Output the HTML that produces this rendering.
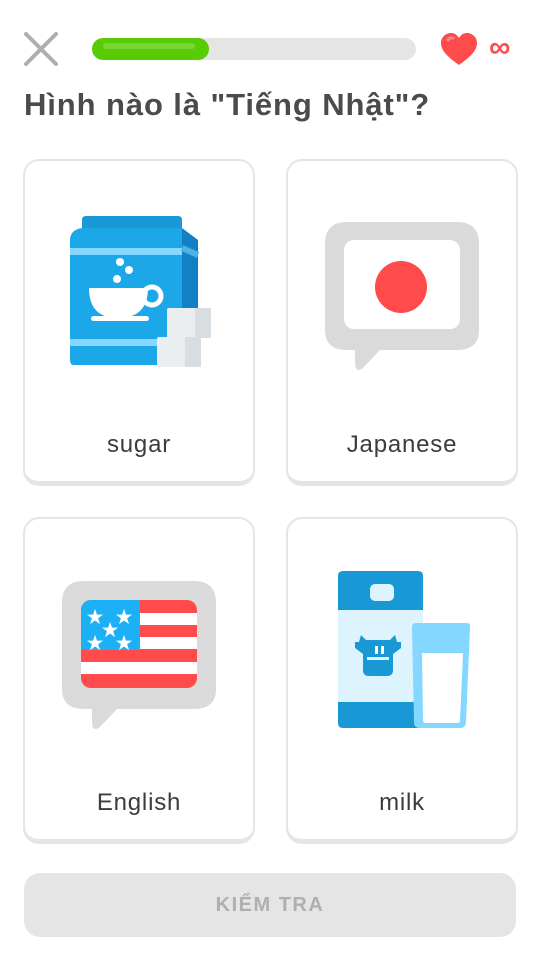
<!DOCTYPE html>
<html><head><meta charset="utf-8"><style>
body{margin:0;width:540px;height:961px;background:#fff;font-family:"Liberation Sans",sans-serif;position:relative;overflow:hidden}
.card{position:absolute;width:228px;height:320px;border:2px solid #e5e5e5;border-bottom-width:5px;border-radius:16px;box-sizing:content-box}
.lbl{position:absolute;left:0;right:0;text-align:center;font-size:24px;color:#3c3c3c;letter-spacing:0.8px}
svg{position:absolute}
</style></head><body>
<svg style="left:22px;top:30px" width="38" height="38" viewBox="0 0 38 38"><path d="M4 4L34 34M34 4L4 34" stroke="#afafaf" stroke-width="4" stroke-linecap="round"/></svg>
<div style="position:absolute;left:92px;top:38px;width:324px;height:22px;background:#e5e5e5;border-radius:11px"></div>
<div style="position:absolute;left:92px;top:38px;width:117px;height:22px;background:#58cc02;border-radius:11px"></div>
<div style="position:absolute;left:103px;top:43px;width:92px;height:6px;background:#79d634;border-radius:3px"></div>
<svg style="left:440px;top:33px" width="38" height="33" viewBox="0 0 38 33"><path d="M19 32C8 24 1 18 1 10C1 4 6 0 11 0C15 0 17 2 19 5C21 2 23 0 27 0C32 0 37 4 37 10C37 18 30 24 19 32Z" fill="#ff4b4b"/><path d="M8 7Q10 4 13 5" stroke="#ff8a8a" stroke-width="3" fill="none" stroke-linecap="round"/></svg>
<div style="position:absolute;left:489px;top:31px;font-size:30px;font-weight:bold;color:#ff4b4b">∞</div>
<div style="position:absolute;left:24px;top:87px;font-size:31px;font-weight:bold;color:#4b4b4b;letter-spacing:0.9px">Hình nào là "Tiếng Nhật"?</div>

<div class="card" style="left:23px;top:159px"><div class="lbl" style="top:270px">sugar</div></div>
<div class="card" style="left:286px;top:159px"><div class="lbl" style="top:270px">Japanese</div></div>
<div class="card" style="left:23px;top:517px"><div class="lbl" style="top:270px">English</div></div>
<div class="card" style="left:286px;top:517px"><div class="lbl" style="top:270px">milk</div></div>

<!-- sugar -->
<svg style="left:60px;top:200px" width="160" height="180" viewBox="0 0 160 180">
<path d="M22 20Q22 16 26 16H118Q122 16 122 20V30H22Z" fill="#1899d6"/>
<path d="M10 40Q10 30 22 28H122V165H14Q10 165 10 160Z" fill="#1ca8e8"/>
<path d="M122 28L138 40V160Q138 165 134 165H122Z" fill="#1280c4"/>
<rect x="10" y="48" width="112" height="7" fill="#84d8ff"/>
<rect x="10" y="139" width="112" height="7" fill="#84d8ff"/>
<path d="M122 48L138 55" stroke="#4fb3e3" stroke-width="6"/>
<circle cx="60" cy="62" r="4" fill="#fff"/><circle cx="69" cy="70" r="4" fill="#fff"/><circle cx="57" cy="79" r="4" fill="#fff"/>
<path d="M29 88H88Q88 118 58 118Q29 118 29 88Z" fill="#fff"/>
<circle cx="92" cy="96" r="9" fill="none" stroke="#fff" stroke-width="5"/>
<rect x="31" y="116" width="58" height="5" rx="2.5" fill="#fff"/>
<rect x="107" y="108" width="44" height="30" rx="2" fill="#eaeef0"/><rect x="135" y="108" width="16" height="30" fill="#d7dde0"/>
<rect x="97" y="137" width="44" height="30" rx="2" fill="#eaeef0"/><rect x="125" y="137" width="16" height="30" fill="#d7dde0"/>
</svg>

<!-- japan -->
<svg style="left:325px;top:222px" width="154" height="150" viewBox="0 0 154 150">
<path d="M22 0H132Q154 0 154 22V108Q154 128 132 128H55L38 146Q30 152 30 140V128H22Q0 128 0 108V22Q0 0 22 0Z" fill="#dadada"/>
<rect x="19" y="18" width="116" height="89" rx="10" fill="#fff"/>
<circle cx="76" cy="65" r="26" fill="#ff4b4b"/>
</svg>

<!-- usa -->
<svg style="left:62px;top:581px" width="154" height="150" viewBox="0 0 154 150">
<path d="M22 0H132Q154 0 154 22V108Q154 128 132 128H55L38 146Q30 152 30 140V128H22Q0 128 0 108V22Q0 0 22 0Z" fill="#dadada"/>
<clipPath id="fc"><rect x="19" y="19" width="116" height="88" rx="10"/></clipPath>
<g clip-path="url(#fc)">
<rect x="19" y="19" width="116" height="88" fill="#ff4b4b"/>
<rect x="19" y="32" width="116" height="12" fill="#fff"/>
<rect x="19" y="56" width="116" height="12" fill="#fff"/>
<rect x="19" y="81" width="116" height="12" fill="#fff"/>
<rect x="19" y="19" width="59" height="50" fill="#1cb0f6"/>
</g>
<g fill="#fff" font-size="21" font-family="DejaVu Sans" text-anchor="middle">
<text x="33" y="43">★</text><text x="62" y="43">★</text><text x="48" y="56">★</text><text x="33" y="69">★</text><text x="62" y="69">★</text>
</g>
</svg>

<!-- milk -->
<svg style="left:320px;top:560px" width="160" height="180" viewBox="0 0 160 180">
<path d="M18 16Q18 11 23 11H98Q103 11 103 16V40L103 50H18Z" fill="#1899d6"/>
<path d="M18 52L30 40H91L103 52Z" fill="#1899d6"/>
<rect x="18" y="50" width="85" height="92" fill="#ddf4ff"/>
<rect x="50" y="24" width="24" height="17" rx="5" fill="#ddf4ff"/>
<path d="M18 142H103V168H23Q18 168 18 163Z" fill="#1899d6"/>
<path d="M41 75L46 80H70L75 75L77 82H81V88L73 94V110Q73 116 67 116H49Q43 116 43 110V94L35 88V82H39Z" fill="#1899d6"/>
<rect x="55" y="86" width="3" height="8" fill="#fff"/><rect x="61" y="86" width="3" height="8" fill="#fff"/>
<rect x="47" y="97" width="22" height="3" fill="#ddf4ff"/>
<path d="M92 67Q92 63 96 63H146Q151 63 150 67L146 162Q146 168 140 168H100Q94 168 94 162Z" fill="#84d8ff"/>
<path d="M102 93H143L140 160Q140 163 137 163H106Q103 163 103 160Z" fill="#fff"/>
</svg>

<div style="position:absolute;left:24px;top:873px;width:492px;height:64px;background:#e5e5e5;border-radius:16px;text-align:center;line-height:64px;font-size:20px;font-weight:bold;color:#afafaf;letter-spacing:1.5px">KIỂM TRA</div>
</body></html>
